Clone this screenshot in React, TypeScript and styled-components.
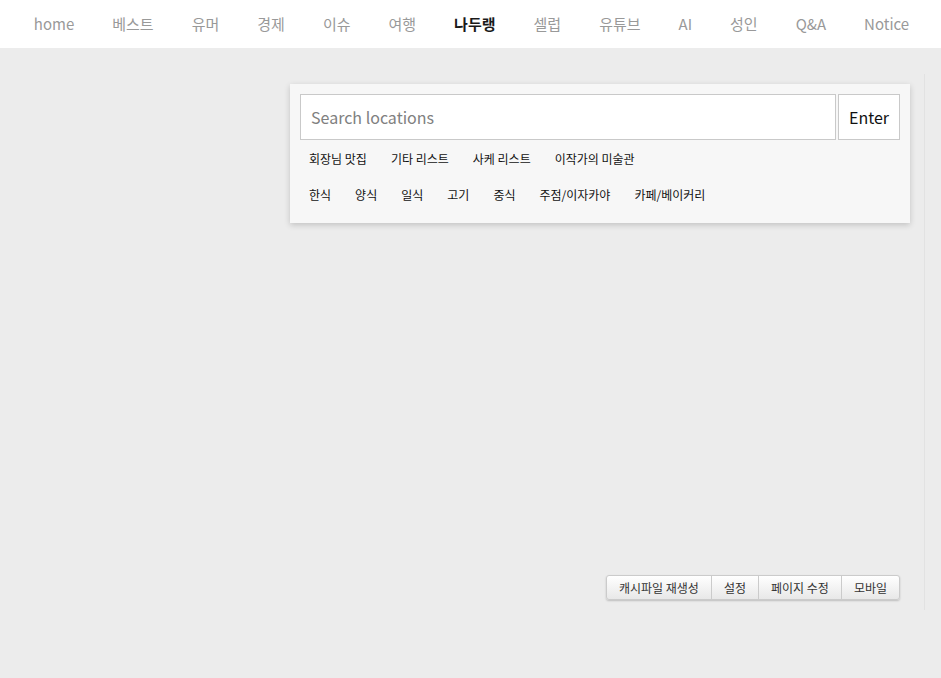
import React, { useState } from "react";
import styled, { createGlobalStyle } from "styled-components";

const FONT = `"Noto Sans CJK KR", "Noto Sans", sans-serif`;

const NAV_ITEMS = [
  "home",
  "베스트",
  "유머",
  "경제",
  "이슈",
  "여행",
  "나두랭",
  "셀럽",
  "유튜브",
  "AI",
  "성인",
  "Q&A",
  "Notice",
];

const LISTS = ["회장님 맛집", "기타 리스트", "사케 리스트", "이작가의 미술관"];
const FOODS = ["한식", "양식", "일식", "고기", "중식", "주점/이자카야", "카페/베이커리"];
const TOOLS = ["캐시파일 재생성", "설정", "페이지 수정", "모바일"];

const GlobalStyle = createGlobalStyle`
  * { box-sizing: border-box; }
  html, body {
    margin: 0;
    padding: 0;
    background: #ececec;
    font-family: ${FONT};
  }
`;

const App = () => {
  const [query, setQuery] = useState("");
  const active = "나두랭";

  return (
    <>
      <GlobalStyle />
      <Page>
        <NavBar>
          {NAV_ITEMS.map((item) => (
            <NavItem key={item} active={item === active}>
              {item}
            </NavItem>
          ))}
        </NavBar>
        <Main>
          <LeftSpace />
          <CenterColumn>
            <SearchPanel>
              <SearchRow>
                <SearchInput
                  value={query}
                  onChange={(e) => setQuery(e.target.value)}
                  placeholder="Search locations"
                />
                <EnterButton>Enter</EnterButton>
              </SearchRow>
              <TagRow>
                {LISTS.map((t) => (
                  <Tag key={t}>{t}</Tag>
                ))}
              </TagRow>
              <TagRow>
                {FOODS.map((t) => (
                  <Tag key={t}>{t}</Tag>
                ))}
              </TagRow>
            </SearchPanel>
            <ToolBar>
              {TOOLS.map((t) => (
                <ToolButton key={t}>{t}</ToolButton>
              ))}
            </ToolBar>
          </CenterColumn>
          <SideRail />
        </Main>
      </Page>
    </>
  );
};

const Page = styled.div`
  width: 941px;
  min-height: 678px;
  background: #ececec;
`;

const NavBar = styled.nav`
  height: 48px;
  background: #fff;
  display: flex;
  justify-content: center;
  align-items: center;
  padding-left: 2px;
`;

const NavItem = styled.a<{ active?: boolean }>`
  padding: 0 19px;
  font-size: 15px;
  line-height: 48px;
  font-weight: ${(p) => (p.active ? 700 : 400)};
  color: ${(p) => (p.active ? "#1a1a1a" : "#999999")};
  cursor: pointer;
  white-space: nowrap;
`;

const Main = styled.div`
  display: flex;
  padding-top: 26px;
`;

const LeftSpace = styled.div`
  width: 290px;
  flex-shrink: 0;
`;

const CenterColumn = styled.div`
  width: 620px;
  height: 536px;
  padding: 10px 0;
  display: flex;
  flex-direction: column;
  justify-content: space-between;
`;

const SearchPanel = styled.div`
  background: #f7f7f7;
  padding: 10px 10px 11px;
  box-shadow: 0 2px 6px rgba(0, 0, 0, 0.18);
`;

const SearchRow = styled.div`
  display: flex;
  gap: 2px;
`;

const SearchInput = styled.input`
  flex: 1;
  height: 46px;
  border: 1px solid #c9c9c9;
  background: #fff;
  padding: 0 10px;
  font-family: ${FONT};
  font-size: 16px;
  color: #333;
  outline: none;
  &::placeholder {
    color: #808080;
  }
`;

const EnterButton = styled.button`
  width: 62px;
  height: 46px;
  border: 1px solid #c9c9c9;
  background: #fff;
  font-family: ${FONT};
  font-size: 16px;
  color: #111;
  padding: 0;
  cursor: pointer;
`;

const TagRow = styled.div`
  display: flex;
  gap: 24px;
  padding: 0 9px;
  height: 36px;
  align-items: center;
`;

const Tag = styled.span`
  font-size: 12px;
  color: #111;
  cursor: pointer;
  white-space: nowrap;
`;

const ToolBar = styled.div`
  display: flex;
  align-self: flex-end;
  margin-right: 10px;
  border-radius: 3px;
  box-shadow: 0 1px 2px rgba(0, 0, 0, 0.2);
`;

const ToolButton = styled.button`
  height: 25px;
  padding: 0 12px;
  border: 1px solid #cbcbcb;
  margin-left: -1px;
  background: linear-gradient(#ffffff, #e8e8e8);
  font-family: ${FONT};
  font-size: 12px;
  color: #333;
  cursor: pointer;
  &:first-child {
    margin-left: 0;
    border-radius: 3px 0 0 3px;
  }
  &:last-child {
    border-radius: 0 3px 3px 0;
  }
`;

const SideRail = styled.div`
  margin-left: 14px;
  width: 17px;
  height: 536px;
  border-left: 1px solid #e2e2e2;
`;

export default App;
